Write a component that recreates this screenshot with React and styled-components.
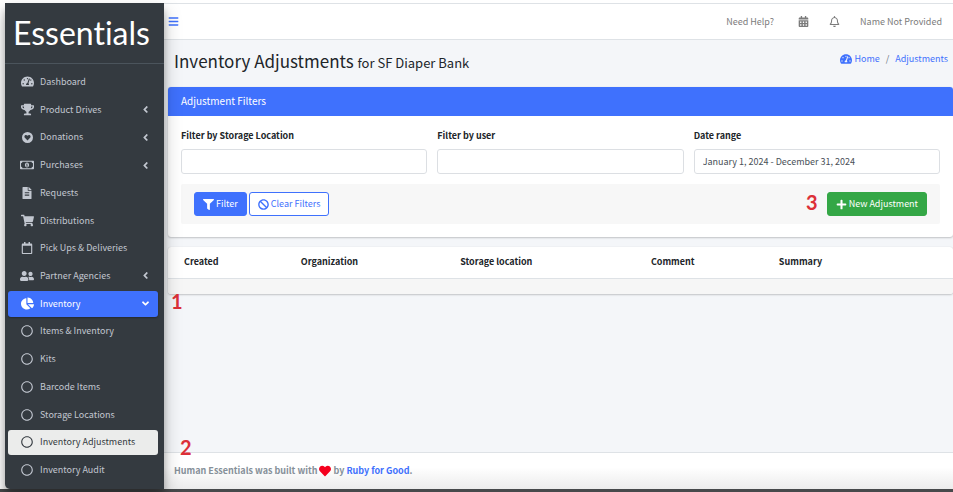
import React from "react";
import styled, { createGlobalStyle, css } from "styled-components";
import {
  FaTachometerAlt, FaTrophy, FaRegMoneyBillAlt, FaFileAlt, FaShoppingCart,
  FaRegCalendar, FaUserFriends, FaChartPie, FaRegCircle, FaAngleLeft,
  FaAngleDown, FaBars, FaCalendarAlt, FaRegBell, FaFilter, FaBan, FaPlus, FaHeart,
} from "react-icons/fa";

const blue = "#3f71fd";

const GlobalStyle = createGlobalStyle`
  * { box-sizing: border-box; }
  body {
    margin: 0;
    background: #fff;
    color: #212529;
    font-family: "Noto Sans CJK SC", "Open Sans", sans-serif;
    font-size: 9px;
    line-height: 16px;
  }
  button, input, select { font: inherit; }
  a { color: ${blue}; text-decoration: none; }
  svg { flex: none; display: block; }
`;

const Page = styled.div`
  display: flex;
  min-height: 100vh;
  padding: 3px 0 0 5px;
  border-bottom: 3px solid #47494b;
`;

const Sidebar = styled.aside`
  position: relative;
  z-index: 1;
  flex: none;
  display: flex;
  flex-direction: column;
  width: 159px;
  padding-bottom: 6px;
  background: #343a40;
  border-bottom-left-radius: 5px;
  box-shadow: 0 9px 18px rgba(0, 0, 0, 0.25), 0 7px 7px rgba(0, 0, 0, 0.22);
`;

const Brand = styled.a`
  display: flex;
  align-items: center;
  height: 61px;
  padding-left: 8px;
  border-bottom: 1px solid #4b545c;
  color: #fff;
  font-family: Lato, sans-serif;
  font-size: 32px;
  font-variant-ligatures: none;
  line-height: 40px;
`;

const Menu = styled.ul`
  flex: 1;
  display: grid;
  grid-auto-rows: minmax(24px, 1fr);
  row-gap: 2px;
  margin: 0;
  padding: 5px 6px 0 3px;
  list-style: none;
`;

const MenuLink = styled.a`
  display: flex;
  align-items: center;
  height: 100%;
  padding: 0 7px 0 11px;
  border-radius: 3px;
  color: #c2c7d0;
  ${(p) => p.$tone === "open" && css`
    background: ${blue};
    color: #fff;
    box-shadow: 0 1px 2px rgba(0, 0, 0, 0.3);
  `}
  ${(p) => p.$tone === "current" && css`
    background: #ebeceb;
    color: #343a40;
  `}
`;

const MenuIcon = styled.span`
  display: flex;
  justify-content: center;
  width: 16px;
  margin-right: 5px;
  font-size: ${(p) => p.$size || 13}px;
`;

const MenuText = styled.span`
  flex: 1;
  white-space: nowrap;
`;

const Main = styled.div`
  flex: 1;
  min-width: 0;
  display: flex;
  flex-direction: column;
  background: #f4f6f9;
  border-top: 1px solid #dee2e6;
`;

const TopBar = styled.header`
  display: flex;
  align-items: center;
  height: 36px;
  padding: 0 11px 0 4px;
  background: #fff;
  border-bottom: 1px solid #dee2e6;
`;

const IconButton = styled.button`
  display: flex;
  padding: 0;
  border: 0;
  background: none;
  color: ${(p) => (p.$accent ? blue : "#7b7b7b")};
  font-size: 11px;
`;

const TopLinks = styled.nav`
  display: flex;
  align-items: center;
  margin-left: auto;
  gap: 20px;
`;

const TopLink = styled.a`
  color: #7b7b7b;
  &:first-child { margin-right: 4px; }
`;

const ContentHeader = styled.div`
  display: flex;
  justify-content: space-between;
  align-items: flex-start;
  height: 47px;
  padding: 9px 5px 0 10px;
`;

const Title = styled.h1`
  margin: 0;
  font-size: 17px;
  font-weight: 400;
  line-height: 24px;
  small { font-size: 13px; }
`;

const Breadcrumb = styled.nav`
  display: flex;
  align-items: center;
  gap: 6px;
  height: 20px;
  color: #6c757d;
  a { display: flex; align-items: center; gap: 2px; }
`;

const Content = styled.main`
  flex: 1;
  display: flex;
  flex-direction: column;
  gap: 10px;
  padding-left: 4px;
`;

const Card = styled.section`
  background: #fff;
  border-radius: 3px;
  box-shadow: 0 0 1px rgba(0, 0, 0, 0.13), 0 1px 2px rgba(0, 0, 0, 0.2);
  overflow: hidden;
`;

const CardHeader = styled.h2`
  margin: 0;
  padding: 6px 13px 7px;
  background: ${blue};
  color: #fff;
  font-size: 10px;
  font-weight: 400;
  line-height: 16px;
`;

const FilterForm = styled.form`
  padding: 12px 13px 13px;
`;

const Fields = styled.div`
  display: grid;
  grid-template-columns: repeat(3, 1fr);
  gap: 10px;
`;

const Field = styled.label`
  display: flex;
  flex-direction: column;
  gap: 5px;
  font-weight: 700;
`;

const controlStyle = css`
  width: 100%;
  height: 25px;
  padding: 0 8px;
  border: 1px solid #dcdfe3;
  border-radius: 3px;
  background: #fff;
  color: #495057;
  font-weight: 400;
`;
const SelectBox = styled.select`
  ${controlStyle}
  appearance: none;
`;
const TextBox = styled.input`
  ${controlStyle}
`;

const Actions = styled.div`
  display: flex;
  align-items: center;
  gap: 2px;
  margin-top: 10px;
  padding: 8px 13px;
  background: #f7f7f7;
  border-radius: 2px;
`;

const Button = styled.button`
  display: flex;
  align-items: center;
  gap: 2px;
  height: 24px;
  padding: 0 8px;
  border: 1px solid ${(p) => (p.$kind === "success" ? "#34a746" : blue)};
  border-radius: 3px;
  background: ${(p) => (p.$kind === "success" ? "#34a746" : p.$kind === "outline" ? "#fff" : blue)};
  color: ${(p) => (p.$kind === "outline" ? blue : "#fff")};
  white-space: nowrap;
`;

const End = styled.div`
  position: relative;
  margin-left: auto;
`;

const Table = styled.table`
  width: 100%;
  table-layout: fixed;
  border-collapse: collapse;
`;

const Col = styled.col`
  width: ${(p) => p.$width};
`;

const HeadCell = styled.th`
  height: 31px;
  padding: 0 8px;
  border-bottom: 1px solid #dee2e6;
  text-align: left;
  font-weight: 700;
  &:first-child { padding-left: 16px; }
`;

const EmptyCell = styled.td`
  height: 16px;
  padding: 0;
  background: #f6f6f6;
`;

const Anchor = styled.div`
  position: relative;
`;

const Mark = styled.span`
  position: absolute;
  ${(p) => p.$place}
  color: #dc3038;
  font-family: Lato, sans-serif;
  font-size: 20px;
  font-weight: 700;
  line-height: 20px;
`;

const Footer = styled.footer`
  position: relative;
  display: flex;
  align-items: center;
  gap: 2px;
  height: 37px;
  padding: 0 10px;
  border-top: 1px solid #dee2e6;
  background: linear-gradient(#fff 40%, #ececec);
  color: #869099;
  font-weight: 700;
`;

const HeartBadge = () => (
  <svg width="1em" height="1em" viewBox="0 0 24 24" fill="currentColor" aria-hidden="true">
    <path
      fillRule="evenodd"
      d="M12 0a12 12 0 1 0 0 24 12 12 0 0 0 0-24zM12 18.500L6.300 12.700C4.800 11.100 5 8.500 6.600 7.200c1.500-1.200 3.600-.9 4.800.4l.6.600.6-.6c1.200-1.300 3.300-1.600 4.800-.4 1.600 1.300 1.800 3.900.3 5.500z"
    />
  </svg>
);

const menu = [
  { label: "Dashboard", icon: FaTachometerAlt },
  { label: "Product Drives", icon: FaTrophy, group: true },
  { label: "Donations", icon: HeartBadge, group: true, size: 11 },
  { label: "Purchases", icon: FaRegMoneyBillAlt, group: true, size: 14 },
  { label: "Requests", icon: FaFileAlt, size: 12 },
  { label: "Distributions", icon: FaShoppingCart },
  { label: "Pick Ups & Deliveries", icon: FaRegCalendar, size: 12 },
  { label: "Partner Agencies", icon: FaUserFriends, group: true, size: 14 },
  { label: "Inventory", icon: FaChartPie, tone: "open" },
  { label: "Items & Inventory", icon: FaRegCircle, size: 12 },
  { label: "Kits", icon: FaRegCircle, size: 12 },
  { label: "Barcode Items", icon: FaRegCircle, size: 12 },
  { label: "Storage Locations", icon: FaRegCircle, size: 12 },
  { label: "Inventory Adjustments", icon: FaRegCircle, size: 12, tone: "current" },
  { label: "Inventory Audit", icon: FaRegCircle, size: 12 },
];

const columns = [
  ["Created", "15.9%"],
  ["Organization", "20.3%"],
  ["Storage location", "24.3%"],
  ["Comment", "16.3%"],
  ["Summary", "auto"],
];

export default function App() {
  return (
    <>
      <GlobalStyle />
      <Page>
        <Sidebar>
          <Brand href="#">Essentials</Brand>
          <Menu>
            {menu.map(({ label, icon: Icon, group, tone, size }) => (
              <li key={label}>
                <MenuLink href="#" $tone={tone}>
                  <MenuIcon $size={size}><Icon /></MenuIcon>
                  <MenuText>{label}</MenuText>
                  {group && <FaAngleLeft size={11} />}
                  {tone === "open" && <FaAngleDown size={11} />}
                </MenuLink>
              </li>
            ))}
          </Menu>
        </Sidebar>
        <Main>
          <TopBar>
            <IconButton $accent aria-label="Toggle menu"><FaBars /></IconButton>
            <TopLinks>
              <TopLink href="#">Need Help?</TopLink>
              <IconButton aria-label="Calendar"><FaCalendarAlt /></IconButton>
              <IconButton aria-label="Notifications"><FaRegBell /></IconButton>
              <TopLink href="#">Name Not Provided</TopLink>
            </TopLinks>
          </TopBar>
          <ContentHeader>
            <Title>Inventory Adjustments <small>for SF Diaper Bank</small></Title>
            <Breadcrumb>
              <a href="#"><FaTachometerAlt size={12} />Home</a>
              <span>/</span>
              <a href="#">Adjustments</a>
            </Breadcrumb>
          </ContentHeader>
          <Content>
            <Card>
              <CardHeader>Adjustment Filters</CardHeader>
              <FilterForm onSubmit={(e) => e.preventDefault()}>
                <Fields>
                  <Field>Filter by Storage Location<SelectBox><option /></SelectBox></Field>
                  <Field>Filter by user<SelectBox><option /></SelectBox></Field>
                  <Field>Date range<TextBox defaultValue="January 1, 2024 - December 31, 2024" /></Field>
                </Fields>
                <Actions>
                  <Button type="submit"><FaFilter size={11} />Filter</Button>
                  <Button type="reset" $kind="outline"><FaBan size={11} />Clear Filters</Button>
                  <End>
                    <Mark $place="right: calc(100% + 9px); top: 0;">3</Mark>
                    <Button type="button" $kind="success"><FaPlus size={11} />New Adjustment</Button>
                  </End>
                </Actions>
              </FilterForm>
            </Card>
            <Anchor>
              <Card>
                <Table>
                  <colgroup>
                    {columns.map(([name, width]) => <Col key={name} $width={width} />)}
                  </colgroup>
                  <thead>
                    <tr>{columns.map(([name]) => <HeadCell key={name}>{name}</HeadCell>)}</tr>
                  </thead>
                  <tbody>
                    <tr><EmptyCell colSpan={5} /></tr>
                  </tbody>
                </Table>
              </Card>
              <Mark $place="left: 3px; top: calc(100% - 3px);">1</Mark>
            </Anchor>
          </Content>
          <Footer>
            <Mark $place="left: 16px; bottom: calc(100% - 4px);">2</Mark>
            Human Essentials was built with
            <FaHeart size={12} color="#f5001d" />
            <span>by <a href="#">Ruby for Good</a>.</span>
          </Footer>
        </Main>
      </Page>
    </>
  );
}
